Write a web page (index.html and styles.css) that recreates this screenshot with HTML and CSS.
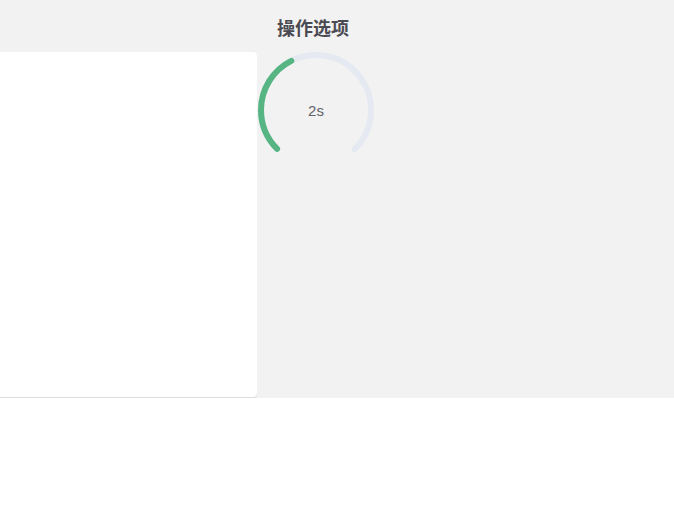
FILE: index.html
```html
<!DOCTYPE html>
<html lang="zh-CN">
<head>
    <meta charset="UTF-8">
    <meta name="viewport" content="width=device-width, initial-scale=1.0">
    <title>操作选项</title>
    <link rel="stylesheet" href="styles.css">
</head>
<body>
<div class="page">
    <!-- 左侧内容区 -->
    <div class="left">
        <div class="card"></div>
    </div>

    <!-- 右侧操作区 -->
    <div class="side">
        <div class="side-title">操作选项</div>
        <div class="dashboard">
            <svg viewBox="0 0 100 100" class="dashboard-svg">
                <path class="track"
                      d="M 50 50 m 0 47.41 a 47.41 47.41 0 1 1 0 -94.82 a 47.41 47.41 0 1 1 0 94.82"
                      stroke-dasharray="223.4 297.9" stroke-dashoffset="-37.2"></path>
                <path class="bar"
                      d="M 50 50 m 0 47.41 a 47.41 47.41 0 1 1 0 -94.82 a 47.41 47.41 0 1 1 0 94.82"
                      stroke-dasharray="89.4 297.9" stroke-dashoffset="-37.2"></path>
            </svg>
            <div class="dashboard-text">2s</div>
        </div>
    </div>
</div>
</body>
</html>
```

FILE: styles.css
```css
/* Global styles */
* {
    margin: 0;
    padding: 0;
    box-sizing: border-box;
}

body {
    font-family: "Helvetica Neue", "Liberation Sans", "Noto Sans CJK SC", sans-serif;
    background-color: #ffffff;
}

.page {
    display: flex;
    height: 398px;
    background-color: #f2f2f2;
}

/* Left panel */
.left {
    width: 257px;
    padding-top: 52px;
    overflow: hidden;
    flex-shrink: 0;
}

.card {
    margin-left: -12px;
    height: 345px;
    background-color: #ffffff;
    border-radius: 4px;
    box-shadow: 0 1px 2px rgba(0, 0, 0, 0.12);
}

/* Side panel */
.side {
    width: 116px;
    margin-left: 1px;
    display: flex;
    flex-direction: column;
}

.side-title {
    height: 52px;
    padding-top: 17px;
    padding-right: 6px;
    text-align: center;
    font-size: 18px;
    line-height: 24px;
    font-weight: bold;
    color: #4a4a52;
}

.dashboard {
    position: relative;
    width: 116px;
    height: 116px;
}

.dashboard-svg {
    display: block;
    width: 116px;
    height: 116px;
}

.dashboard-svg path {
    fill: none;
    stroke-width: 5.17;
    stroke-linecap: round;
}

.track {
    stroke: #e5e9f2;
}

.bar {
    stroke: #56b582;
}

.dashboard-text {
    position: absolute;
    left: 0;
    top: 50%;
    width: 100%;
    transform: translateY(-50%);
    text-align: center;
    font-size: 15px;
    color: #606266;
}
```
